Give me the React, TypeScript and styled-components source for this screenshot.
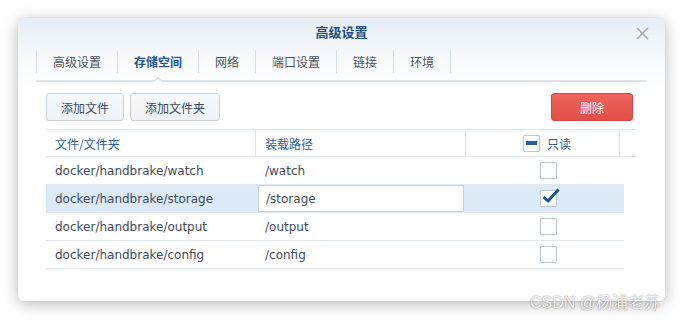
import React from "react"
import styled, { createGlobalStyle } from "styled-components"

const GlobalStyle = createGlobalStyle`
  html, body {
    margin: 0;
    background: #fff;
  }
  body {
    font-family: "DejaVu Sans", "Noto Sans CJK SC", sans-serif;
    font-size: 12px;
    color: #414b56;
  }
`

const Page = styled.div`
  position: relative;
  width: 683px;
  height: 320px;
  padding: 18px 0 0 18px;
  box-sizing: border-box;
`

const Dialog = styled.div`
  width: 647px;
  height: 283px;
  border-radius: 6px;
  background: linear-gradient(#e7eef5 0, #f7f9fb 40px, #fff 70px);
  box-shadow: 0 3px 16px rgba(0, 0, 0, 0.28), 0 0 1px rgba(0, 0, 0, 0.2);
  display: flex;
  flex-direction: column;
`

const TitleBar = styled.div`
  height: 30px;
  display: grid;
  grid-template-columns: 1fr auto 1fr;
  align-items: center;
`

const Title = styled.div`
  grid-column: 2;
  font-size: 13px;
  font-weight: bold;
  color: #1f4f80;
  line-height: 30px;
`

const Close = styled.div`
  justify-self: end;
  margin-right: 16px;
  width: 13px;
  height: 13px;
  display: flex;
`

const TabBar = styled.div`
  margin: 0 19px 0 18px;
  height: 30px;
  padding-top: 2px;
  display: flex;
  align-items: flex-start;
  border-bottom: 2px solid #dfe2e6;
`

const Tab = styled.div<{ $active?: boolean }>`
  position: relative;
  height: 23px;
  line-height: 23px;
  padding: 0 16px;
  border-left: 1px solid #d5e0ea;
  font-size: 12px;
  font-family: "Noto Sans CJK SC", sans-serif;
  font-weight: ${(p) => (p.$active ? "bold" : "normal")};
  color: ${(p) => (p.$active ? "#23578c" : "#4a535d")};

  &:last-child {
    border-right: 1px solid #d5e0ea;
  }

  ${(p) =>
    p.$active &&
    `
    &::before {
      content: "";
      position: absolute;
      left: 50%;
      bottom: -9px;
      margin-left: -6px;
      border: 6px solid transparent;
      border-bottom: 5px solid #dfe2e6;
      border-top: 0;
    }
    &::after {
      content: "";
      position: absolute;
      left: 50%;
      bottom: -10px;
      margin-left: -5px;
      border: 5px solid transparent;
      border-bottom: 4px solid #fff;
      border-top: 0;
    }
  `}
`

const Content = styled.div`
  padding: 11px 29px 0 28px;
  display: flex;
  flex-direction: column;
`

const Toolbar = styled.div`
  display: flex;
  gap: 6px;
  height: 28px;
`

const Button = styled.button<{ $danger?: boolean }>`
  height: 28px;
  padding: 0 14px;
  border-radius: 3px;
  font-family: "Noto Sans CJK SC", sans-serif;
  font-size: 12px;
  border: 1px solid ${(p) => (p.$danger ? "#d9453f" : "#c6d1dc")};
  background: ${(p) =>
    p.$danger
      ? "linear-gradient(#ee645c, #e04f48)"
      : "linear-gradient(#f7f9fb, #eef2f6)"};
  color: ${(p) => (p.$danger ? "#fff" : "#414b56")};
  ${(p) => p.$danger && "margin-left: auto; margin-right: 3px; width: 82px;"}
`

const Table = styled.div`
  margin-top: 8px;
  display: flex;
  flex-direction: column;
`

const HeaderRow = styled.div`
  display: grid;
  grid-template-columns: 210px 210px 154px 16px;
  height: 26px;
  border-top: 1px solid #dde5ee;
  border-bottom: 1px solid #dde5ee;
`

const HeaderCell = styled.div<{ $center?: boolean }>`
  display: flex;
  align-items: center;
  justify-content: ${(p) => (p.$center ? "center" : "flex-start")};
  gap: 7px;
  padding: ${(p) => (p.$center ? "0 0 0 9px" : "0 9px")};
  border-right: 1px solid #dde5ee;
  font-family: "Noto Sans CJK SC", sans-serif;
  color: #2e6299;

  &:last-child {
    border-right: 0;
  }
`

const Row = styled.div<{ $selected?: boolean }>`
  display: grid;
  grid-template-columns: 210px 210px 158px;
  width: 578px;
  height: 27px;
  border-bottom: 1px solid #e3e9ef;
  background: ${(p) => (p.$selected ? "#dceaf8" : "transparent")};
`

const Cell = styled.div<{ $center?: boolean }>`
  display: flex;
  align-items: center;
  justify-content: ${(p) => (p.$center ? "center" : "flex-start")};
  padding: ${(p) => (p.$center ? "0 0 0 6px" : "0 9px")};
  font-size: 12px;
`

const PathInput = styled.input`
  flex-shrink: 0;
  box-sizing: border-box;
  width: 206px;
  height: 27px;
  margin: 0 0 0 -7px;
  padding: 0 7px;
  border: 1px solid #c6d2de;
  background: #fff;
  font-family: "DejaVu Sans", sans-serif;
  font-size: 12px;
  color: #414b56;
  outline: none;
`

const Box = styled.div`
  position: relative;
  box-sizing: border-box;
  width: 17px;
  height: 17px;
  border: 1px solid #bccad8;
  border-radius: 1px;
  background: #fff;
  display: flex;
  align-items: center;
  justify-content: center;
`

const Minus = styled.div`
  width: 11px;
  height: 4px;
  background: #24609d;
`

const Tick = styled.svg`
  position: absolute;
  left: 1px;
  top: -3px;
`

const Watermark = styled.div`
  position: absolute;
  left: 530px;
  top: 289px;
  font-family: "Liberation Sans", "Noto Sans CJK SC", sans-serif;
  font-size: 16px;
  color: rgba(255, 255, 255, 0.9);
  text-shadow: 0 0 1.5px rgba(0, 0, 0, 0.55);
  white-space: nowrap;
`

const rows = [
  { src: "docker/handbrake/watch", dst: "/watch" },
  { src: "docker/handbrake/storage", dst: "/storage", selected: true },
  { src: "docker/handbrake/output", dst: "/output" },
  { src: "docker/handbrake/config", dst: "/config" },
]

const tabs = ["高级设置", "存储空间", "网络", "端口设置", "链接", "环境"]

const Checkbox = ({ checked }: { checked?: boolean }) => (
  <Box>
    {checked && (
      <Tick width="18" height="16" viewBox="0 0 18 16">
        <path
          d="M1.5 9 L6 13 L16.5 1.5"
          fill="none"
          stroke="#1d5591"
          strokeWidth="3"
          strokeLinejoin="round"
        />
      </Tick>
    )}
  </Box>
)

export default function App() {
  return (
    <Page>
      <GlobalStyle />
      <Dialog>
        <TitleBar>
          <Title>高级设置</Title>
          <Close>
            <svg width="13" height="13" viewBox="0 0 13 13">
              <path
                d="M1 1 L12 12 M12 1 L1 12"
                stroke="#a3abb3"
                strokeWidth="1.6"
              />
            </svg>
          </Close>
        </TitleBar>
        <TabBar>
          {tabs.map((t) => (
            <Tab key={t} $active={t === "存储空间"}>
              {t}
            </Tab>
          ))}
        </TabBar>
        <Content>
          <Toolbar>
            <Button>添加文件</Button>
            <Button>添加文件夹</Button>
            <Button $danger>删除</Button>
          </Toolbar>
          <Table>
            <HeaderRow>
              <HeaderCell>文件/文件夹</HeaderCell>
              <HeaderCell>装载路径</HeaderCell>
              <HeaderCell $center>
                <Box>
                  <Minus />
                </Box>
                只读
              </HeaderCell>
              <HeaderCell />
            </HeaderRow>
            {rows.map((r) => (
              <Row key={r.src} $selected={r.selected}>
                <Cell>{r.src}</Cell>
                <Cell>
                  {r.selected ? <PathInput defaultValue={r.dst} /> : r.dst}
                </Cell>
                <Cell $center>
                  <Checkbox checked={r.selected} />
                </Cell>
              </Row>
            ))}
          </Table>
        </Content>
      </Dialog>
      <Watermark>CSDN @杨浦老苏</Watermark>
    </Page>
  )
}
